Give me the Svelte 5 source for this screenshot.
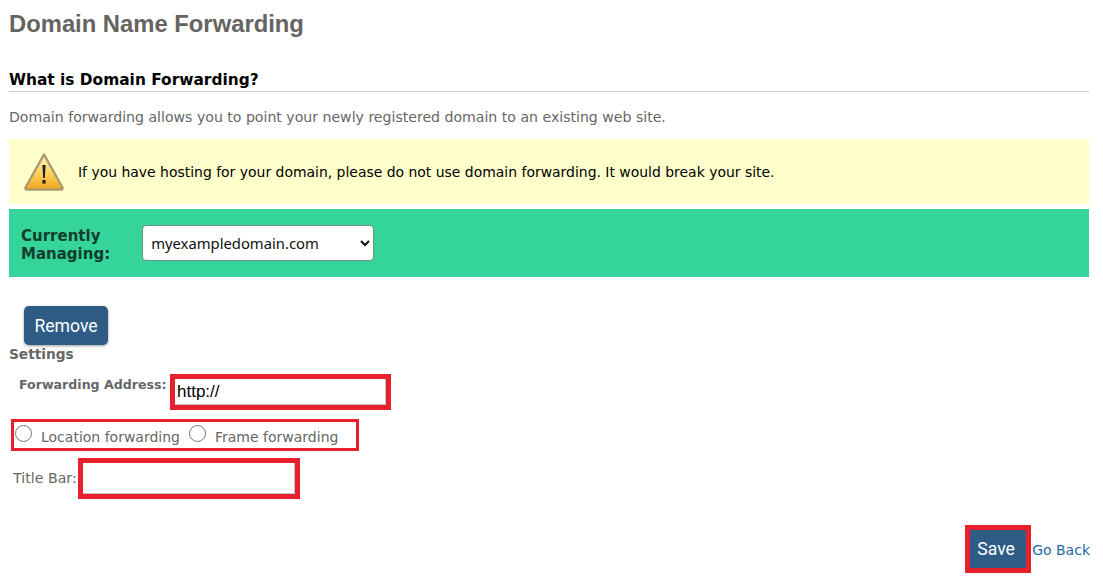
<script lang="ts">
	let domain = $state('myexampledomain.com');
	let address = $state('http://');
	let titleBar = $state('');
	let mode = $state('');
</script>

<main class="page">
	<h1>Domain Name Forwarding</h1>

	<h2>What is Domain Forwarding?</h2>
	<p class="intro">Domain forwarding allows you to point your newly registered domain to an existing web site.</p>

	<div class="notice">
		<svg class="warn" width="42" height="40" viewBox="0 0 42 40" aria-hidden="true">
			<defs>
				<linearGradient id="warn-fill" x1="0" y1="0" x2="0" y2="1">
					<stop offset="0" stop-color="#fff6c4" />
					<stop offset="0.55" stop-color="#fbd25a" />
					<stop offset="1" stop-color="#efa41e" />
				</linearGradient>
			</defs>
			<path d="M21 2.5 39.5 35.5Q40 37.5 38 37.5H4Q2 37.5 2.5 35.5Z" fill="url(#warn-fill)" stroke="#ab9a6c" stroke-width="2.4" stroke-linejoin="round" />
			<path d="M19.4 13h3.2l-.8 13h-1.6z" fill="#222" />
			<rect x="19.4" y="28" width="3.2" height="3.6" fill="#222" />
		</svg>
		<span>If you have hosting for your domain, please do not use domain forwarding. It would break your site.</span>
	</div>

	<div class="managing">
		<label for="domain">Currently<br />Managing:</label>
		<select id="domain" bind:value={domain}>
			<option>myexampledomain.com</option>
		</select>
	</div>

	<button class="btn remove" type="button">Remove</button>

	<h3>Settings</h3>

	<div class="address">
		<label for="address">Forwarding Address:</label>
		<input id="address" class="marked" type="text" bind:value={address} />
	</div>

	<div class="radios">
		<label><input type="radio" name="mode" value="location" bind:group={mode} />Location forwarding</label>
		<label><input type="radio" name="mode" value="frame" bind:group={mode} />Frame forwarding</label>
	</div>

	<div class="title-bar">
		<label for="title-bar">Title Bar:</label>
		<input id="title-bar" class="marked" type="text" bind:value={titleBar} />
	</div>

	<div class="actions">
		<button class="btn save" type="button">Save</button>
		<a href="#back">Go Back</a>
	</div>
</main>

<style>
	:global(body) {
		background: #fff;
	}

	.page {
		box-sizing: border-box;
		width: 1103px;
		height: 577px;
		overflow: hidden;
		padding: 11px 14px 0 9px;
		font-family: "DejaVu Sans", Verdana, sans-serif;
		font-size: 14px;
		color: #666;
	}

	h1 {
		margin: 0;
		font: bold 23.8px/26px "Liberation Sans", Arial, sans-serif;
		color: #666361;
	}

	h2 {
		margin: 34px 0 0;
		padding-bottom: 2px;
		border-bottom: 1px solid #ccc;
		font-size: 15.4px;
		line-height: 18px;
		font-weight: bold;
		color: #000;
	}

	.intro {
		margin: 17px 0 0;
		font-size: 14.1px;
		line-height: 17px;
	}

	.notice {
		display: flex;
		align-items: center;
		gap: 13px;
		height: 65px;
		margin-top: 13px;
		padding-left: 14px;
		background: #ffffcc;
		font-size: 13.94px;
		color: #000;
	}

	.managing {
		display: flex;
		align-items: center;
		gap: 32px;
		height: 68px;
		margin-top: 5px;
		padding-left: 12px;
		background: #35d49a;
	}

	.managing label {
		margin-top: 4px;
		font-size: 15px;
		line-height: 18px;
		font-weight: bold;
		color: #123c2d;
	}

	select {
		box-sizing: border-box;
		width: 232px;
		height: 36px;
		padding-left: 4px;
		border: 1px solid #6c8f80;
		border-radius: 4px;
		background: #fff;
		font-family: "Noto Sans", Arial, sans-serif;
		font-size: 14.8px;
		color: #111;
	}

	.btn {
		border: 0;
		background: #2f5c85;
		color: #fff;
		font-family: "Roboto", "Liberation Sans", sans-serif;
		font-size: 17.6px;
	}

	.remove {
		display: block;
		width: 84px;
		height: 39px;
		margin: 29px 0 0 15px;
		border-radius: 5px;
		box-shadow: 0 1px 3px rgba(0, 0, 0, 0.4);
	}

	h3 {
		margin: 1px 0 0;
		font-size: 13.7px;
		line-height: 16px;
		font-weight: bold;
		color: #666;
	}

	.marked {
		box-sizing: border-box;
		border: 5px solid #e8202d;
		outline: none;
		background: #fff;
		box-shadow: inset -1px -1px 0 #c4c4c4;
		font-family: "Liberation Sans", Arial, sans-serif;
		font-size: 17px;
		color: #000;
	}

	.address {
		display: flex;
		align-items: flex-start;
		gap: 3px;
		margin-top: 12px;
		padding-left: 10px;
	}

	.address label {
		width: 148px;
		padding-top: 3px;
		font-size: 12.6px;
		line-height: 16px;
		font-weight: bold;
		white-space: nowrap;
	}

	.address input {
		width: 221px;
		height: 36px;
		padding: 0 0 0 2px;
	}

	.radios {
		box-sizing: border-box;
		display: flex;
		gap: 9px;
		width: 348px;
		height: 32px;
		margin: 9px 0 0 2px;
		padding-left: 1px;
		border: 3px solid #e8202d;
	}

	.radios label {
		display: flex;
		align-items: flex-start;
		line-height: 16px;
		padding-top: 7px;
	}

	.radios input {
		width: 17px;
		height: 17px;
		margin: -4px 9px 0 0;
	}

	.title-bar {
		display: flex;
		align-items: center;
		gap: 1px;
		margin-top: 7px;
		padding-left: 4px;
	}

	.title-bar label {
		margin-top: -2px;
		font-size: 14.2px;
	}

	.title-bar input {
		width: 222px;
		height: 41px;
		padding: 0 2px;
	}

	.actions {
		display: flex;
		justify-content: flex-end;
		align-items: flex-end;
		gap: 1px;
		margin-top: 26px;
		margin-right: -1px;
	}

	.save {
		box-sizing: border-box;
		width: 66px;
		height: 48px;
		padding: 0 4px 0 0;
		border: 5px solid #e8202d;
	}

	.actions a {
		padding-bottom: 14px;
		line-height: 17px;
		color: #1f6aa5;
		text-decoration: none;
	}
</style>
